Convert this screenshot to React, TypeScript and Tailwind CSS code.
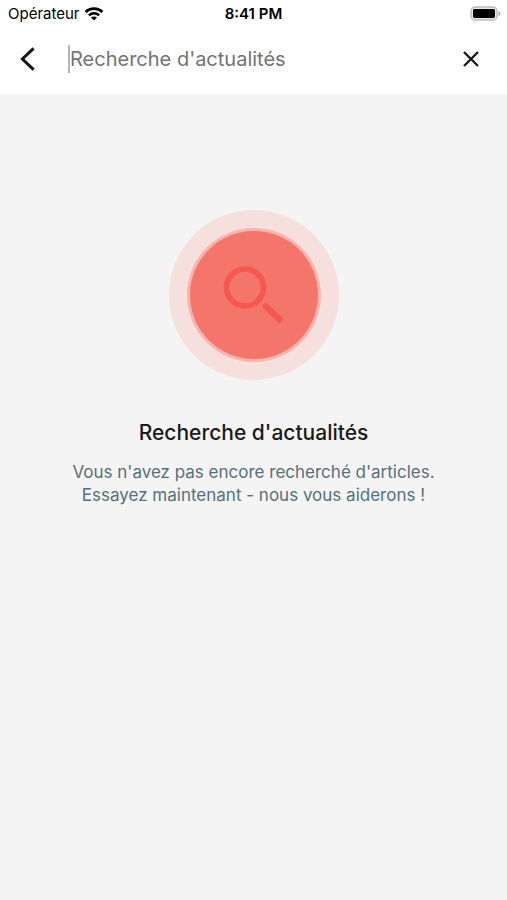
import React, { useState } from "react";

const StatusBar = () => {
  return (
    <div className="grid h-7 grid-cols-3 items-center text-black">
      <div className="flex items-center gap-1 pl-2">
        <span className="text-[15px]">Opérateur</span>
        <svg width="20" height="15" viewBox="0 0 20 15" fill="none" stroke="currentColor">
          <path d="M1.6 5C6.2.6 13.8.6 18.4 5" strokeWidth="2.7" />
          <path d="M4.9 8.4c2.9-2.8 7.3-2.8 10.2 0" strokeWidth="2.5" />
          <path d="M10 13.6 7 10.6c1.7-1.5 4.3-1.5 6 0z" fill="currentColor" stroke="none" />
        </svg>
      </div>
      <span className="text-center text-[15px] font-semibold">8:41 PM</span>
      <div className="flex justify-end pr-1">
        <svg width="33" height="16" viewBox="0 0 33 16">
          <rect x="1" y="1" width="26" height="13" rx="4" fill="#e9e9e9" stroke="#bdbdbd" strokeWidth="1.4" />
          <rect x="3" y="3" width="22" height="9" rx="1.4" fill="#000" />
          <path d="M28.6 4.9c2.4 1 2.4 4.2 0 5.2z" fill="#a8a8a8" />
        </svg>
      </div>
    </div>
  );
};

const App = () => {
  const [query, setQuery] = useState("");

  return (
    <div className="flex min-h-screen flex-col bg-[#f4f4f4] font-['Inter','Liberation_Sans',sans-serif]">
      <header className="bg-white pb-1">
        <StatusBar />
        <div className="flex h-[62px] items-center pr-5 pl-4">
          <button type="button" aria-label="Retour" className="flex size-6 items-center justify-center text-[#161616]">
            <svg width="18" height="26" viewBox="0 0 18 26" fill="none" stroke="currentColor" strokeWidth="3">
              <path d="M14.6 2.4 3.4 13l11.2 10.6" />
            </svg>
          </button>
          <input
            type="text"
            aria-label="Recherche d'actualités"
            placeholder="Recherche d'actualités"
            value={query}
            onChange={(e) => setQuery(e.target.value)}
            className="ml-7 h-7 min-w-0 flex-1 border-l-2 border-[#b4b4b4] text-xl text-[#161616] outline-none placeholder:text-[#737373]"
          />
          <button type="button" aria-label="Effacer" onClick={() => setQuery("")} className="flex size-8 items-center justify-center text-[#161616]">
            <svg width="16" height="16" viewBox="0 0 16 16" fill="none" stroke="currentColor" strokeWidth="2.3">
              <path d="m1 1 14 14M15 1 1 15" />
            </svg>
          </button>
        </div>
      </header>

      <main className="flex flex-col items-center px-4 pt-[115px] text-center">
        <svg width="172" height="172" viewBox="0 0 172 172" fill="none">
          <circle cx="86" cy="86" r="85" fill="#f5e0de" />
          <circle cx="86" cy="86" r="67" fill="#f5b5ae" />
          <circle cx="86" cy="86" r="64" fill="#f4756a" />
          <circle cx="77" cy="78.5" r="18.5" stroke="#f4584e" strokeWidth="5.6" />
          <path d="m97.5 97 14 13.5" stroke="#f4584e" strokeWidth="6" strokeLinecap="round" />
        </svg>
        <h1 className="mt-9 text-[21px] leading-8 font-medium text-[#1a1a1a]">Recherche d'actualités</h1>
        <p className="mt-3 text-[17px] leading-[23px] text-[#56707a]">
          Vous n'avez pas encore recherché d'articles.
          <br />
          Essayez maintenant - nous vous aiderons !
        </p>
      </main>
    </div>
  );
};

export default App;
